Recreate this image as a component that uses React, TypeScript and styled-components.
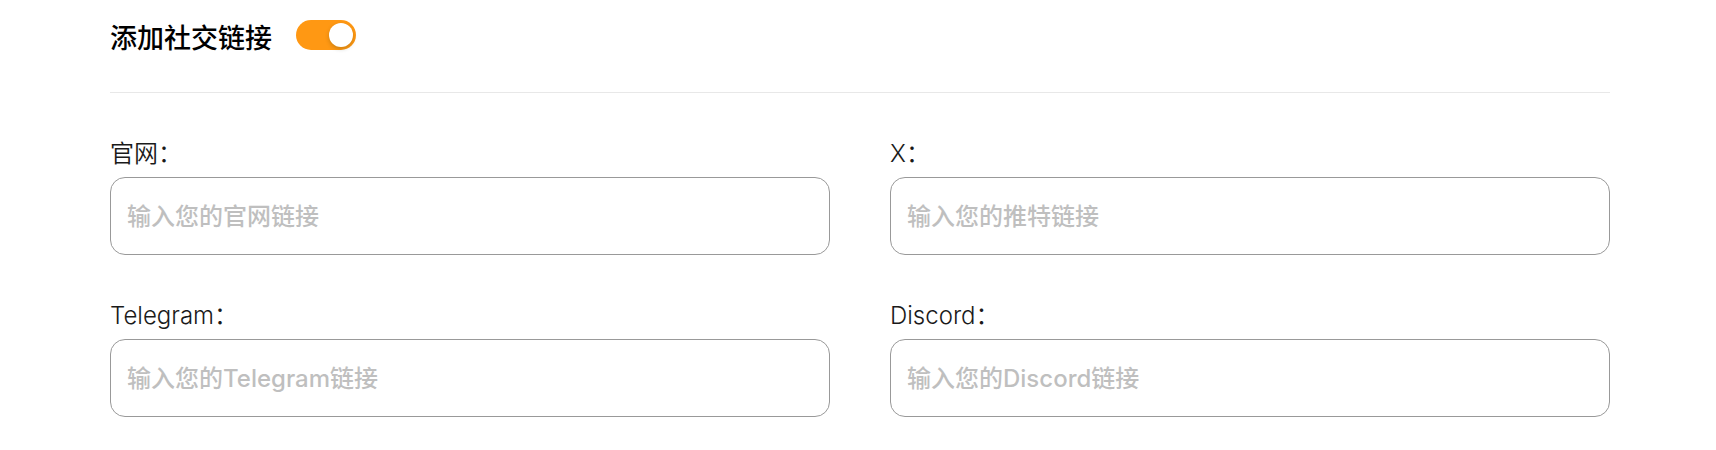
import React, { useState } from 'react';
import styled, { createGlobalStyle } from 'styled-components';

const GlobalStyle = createGlobalStyle`
  *, *::before, *::after { box-sizing: border-box; }
  body {
    margin: 0;
    background: #fff;
    color: #000;
    font-family: Inter, "Noto Sans CJK SC", sans-serif;
  }
`;

const Page = styled.main`
  padding: 20px 106px 32px 110px;
`;

const Header = styled.header`
  display: flex;
  align-items: flex-start;
  gap: 24px;
  padding-bottom: 34px;
  border-bottom: 1px solid #e8e8e8;
`;

const Title = styled.h2`
  margin: 0;
  font-size: 27px;
  line-height: 38px;
  font-weight: 500;
`;

const Switch = styled.input`
  appearance: none;
  display: flex;
  align-items: center;
  width: 60px;
  height: 30px;
  margin: 0;
  padding: 0 3px;
  border-radius: 15px;
  background: #bfbfbf;
  cursor: pointer;

  &::before {
    content: '';
    width: 24px;
    height: 24px;
    border-radius: 50%;
    background: #fff;
    box-shadow: 0 2px 4px rgba(0, 35, 11, 0.2);
  }

  &:checked {
    justify-content: flex-end;
    background: #ff9813;
  }
`;

const Fields = styled.form`
  display: grid;
  grid-template-columns: 1fr 1fr;
  gap: 44px 60px;
  padding-top: 44px;
`;

const Field = styled.div`
  display: flex;
  flex-direction: column;
  gap: 6px;
`;

const Label = styled.label`
  color: #1a1a1a;
  font-size: 24px;
  line-height: 34px;
  font-weight: 350;
`;

const TextInput = styled.input`
  width: 100%;
  height: 78px;
  padding: 0 16px;
  border: 1px solid #999;
  border-radius: 15px;
  background: #fff;
  font: inherit;
  font-size: 24px;
  font-weight: 500;
  outline: none;

  &::placeholder { color: #bfbfbf; opacity: 1; }
`;

const links = [
  { id: 'website', label: '官网', placeholder: '输入您的官网链接' },
  { id: 'x', label: 'X', placeholder: '输入您的推特链接' },
  { id: 'telegram', label: 'Telegram', placeholder: '输入您的Telegram链接' },
  { id: 'discord', label: 'Discord', placeholder: '输入您的Discord链接' },
];

export default function App() {
  const [enabled, setEnabled] = useState(true);
  return (
    <Page lang="zh-CN">
      <GlobalStyle />
      <Header>
        <Title id="social-title">添加社交链接</Title>
        <Switch
          type="checkbox"
          role="switch"
          aria-labelledby="social-title"
          checked={enabled}
          onChange={(e) => setEnabled(e.target.checked)}
        />
      </Header>
      {enabled && (
        <Fields>
          {links.map((l) => (
            <Field key={l.id}>
              <Label htmlFor={l.id}>{l.label}：</Label>
              <TextInput id={l.id} type="text" placeholder={l.placeholder} />
            </Field>
          ))}
        </Fields>
      )}
    </Page>
  );
}
